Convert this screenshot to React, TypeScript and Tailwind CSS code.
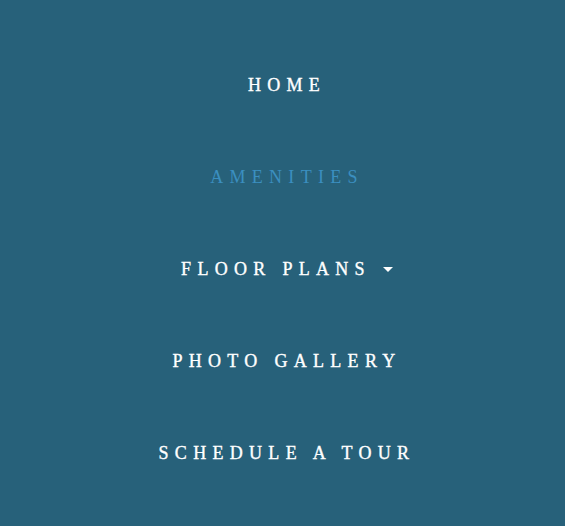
import React from "react";

const items = [
  { label: "Home", active: false, caret: false },
  { label: "Amenities", active: true, caret: false },
  { label: "Floor Plans", active: false, caret: true },
  { label: "Photo Gallery", active: false, caret: false },
  { label: "Schedule a Tour", active: false, caret: false },
];

export default function App() {
  return (
    <div
      className="w-[565px] h-[526px] bg-[#27617a] pt-[39px] flex flex-col"
      style={{ fontFamily: '"Liberation Serif", "DejaVu Serif", serif' }}
    >
      {items.map((it) => (
        <div key={it.label} className="h-[92px] flex items-center justify-center pl-[9px]">
          <span
            className={`uppercase text-[18px] leading-none tracking-[6.3px] ${
              it.active
                ? "text-[#3b8fc0]"
                : "text-white [-webkit-text-stroke:0.35px_currentColor]"
            }`}
          >
            {it.label}
          </span>
          {it.caret && (
            <span className="ml-[12px] w-0 h-0 border-l-[5px] border-r-[5px] border-t-[5px] border-l-transparent border-r-transparent border-t-white" />
          )}
        </div>
      ))}
    </div>
  );
}
